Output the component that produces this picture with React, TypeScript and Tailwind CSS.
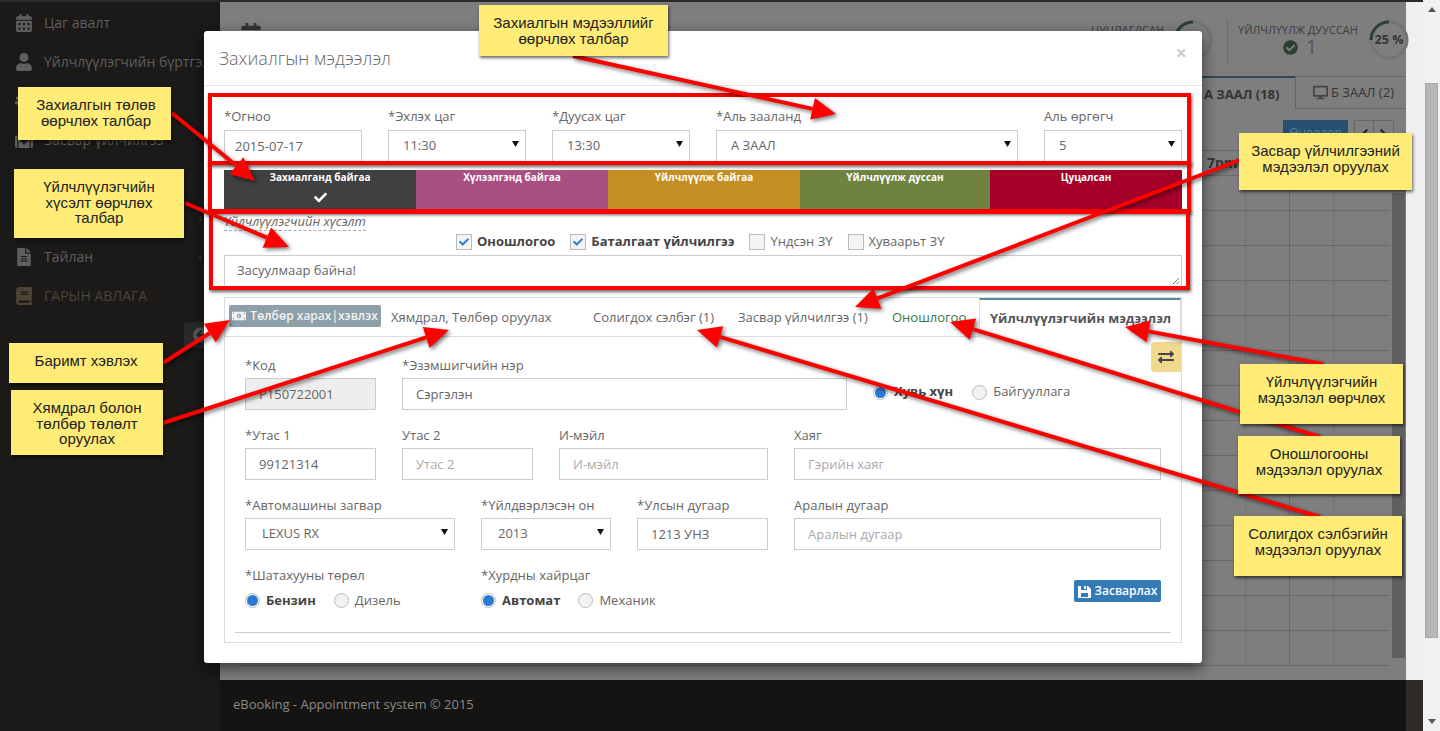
import React from 'react';
import {
  FaArrowCircleLeft,
  FaBook,
  FaCalendarAlt,
  FaCheck,
  FaCheckCircle,
  FaChevronLeft,
  FaChevronRight,
  FaCog,
  FaDesktop,
  FaExchangeAlt,
  FaFileAlt,
  FaMedkit,
  FaMoneyBillAlt,
  FaUser,
  FaUsers,
} from 'react-icons/fa';

const hours = ['9am', '10am', '11am', '12pm', '1pm', '2pm', '3pm', '4pm', '5pm', '6pm', '7pm', '8pm'];
const rowCount = Array.from({ length: 14 }, (_, i) => i);
const halfHours = Array.from({ length: 24 }, (_, i) => i);

const statuses = [
  { label: 'Захиалганд байгаа', className: 'w-[192px] bg-[#404040]', active: true },
  { label: 'Хүлээлгэнд байгаа', className: 'w-[192px] bg-[#a85082]', active: false },
  { label: 'Үйлчлүүлж байгаа', className: 'w-[192px] bg-[#c48e22]', active: false },
  { label: 'Үйлчлүүлж дуссан', className: 'w-[190px] bg-[#6f823f]', active: false },
  { label: 'Цуцалсан', className: 'w-[192px] bg-[#a5002a]', active: false },
];

const arrows = [
  { from: [573, 56], to: [836, 114] },
  { from: [172, 113], to: [255, 181] },
  { from: [185, 203], to: [289, 247] },
  { from: [1240, 160], to: [855, 307] },
  { from: [163, 363], to: [230, 320] },
  { from: [163, 423], to: [449, 330] },
  { from: [1323, 364], to: [1125, 327] },
  { from: [1320, 437], to: [950, 322] },
  { from: [1320, 517], to: [697, 330] },
];

const Arrow: React.FC<{ from: number[]; to: number[] }> = ({ from, to }) => {
  const angle = Math.atan2(to[1] - from[1], to[0] - from[0]);
  const baseX = to[0] - Math.cos(angle) * 24;
  const baseY = to[1] - Math.sin(angle) * 24;
  const nx = -Math.sin(angle) * 11;
  const ny = Math.cos(angle) * 11;
  return (
    <g fill="#ff0000">
      <line x1={from[0]} y1={from[1]} x2={baseX} y2={baseY} stroke="#ff0000" strokeWidth={4} />
      <polygon points={`${to[0]},${to[1]} ${baseX + nx},${baseY + ny} ${baseX - nx},${baseY - ny}`} />
    </g>
  );
};

const Callout: React.FC<{ className: string; children: React.ReactNode }> = ({ className, children }) => (
  <div
    className={`absolute bg-[#feec76] pt-[10px] text-center font-['Liberation_Sans',sans-serif] text-[15px] leading-[15.5px] text-[#222] shadow-[1px_2px_3px_rgba(0,0,0,0.6)] ${className}`}
  >
    {children}
  </div>
);

const Field: React.FC<{ label: string; className: string; children: React.ReactNode; top?: boolean }> = ({ label, className, children, top }) => (
  <div className={className}>
    <div className={`h-5 text-[13px] leading-5 text-[#666] ${top ? 'mb-1' : 'mb-[3px]'}`}>{label}</div>
    {children}
  </div>
);

const TextInput: React.FC<{ value?: string; placeholder?: string; disabled?: boolean; top?: boolean }> = ({ value, placeholder, disabled, top }) => (
  <input
    readOnly
    value={value ?? ''}
    placeholder={placeholder}
    className={`block h-8 w-full border border-[#ccc] text-[13px] text-[#666] outline-none placeholder:text-[#aaa] ${top ? 'px-[10px]' : 'px-[13px]'} ${disabled ? 'bg-[#eee]' : 'bg-white'}`}
  />
);

const SelectBox: React.FC<{ value: string; top?: boolean }> = ({ value, top }) => (
  <div className={`flex h-8 w-full items-center justify-between border border-[#ccc] bg-white pr-[6px] text-[13px] text-[#666] ${top ? 'pl-[14px]' : 'pl-[16px]'}`}>
    <span>{value}</span>
    <svg width="7" height="6" viewBox="0 0 7 6" className="mb-1">
      <polygon points="0,0 7,0 3.5,6" fill="#111" />
    </svg>
  </div>
);

const Radio: React.FC<{ label: string; checked?: boolean }> = ({ label, checked }) => (
  <span className="flex items-center gap-[6px] text-[13px] text-[#666]">
    <span className={`flex h-[15px] w-[15px] items-center justify-center rounded-full border border-[#bbb] ${checked ? 'bg-white' : 'bg-[#f2f2f2]'}`}>
      {checked && <span className="h-[11px] w-[11px] rounded-full bg-[#2a7bd3]" />}
    </span>
    <span className={checked ? 'font-bold text-[#444]' : ''}>{label}</span>
  </span>
);

const CheckItem: React.FC<{ label: string; checked?: boolean }> = ({ label, checked }) => (
  <span className="flex items-center gap-[5px] text-[13px] text-[#666]">
    <span className="flex h-4 w-4 items-center justify-center border border-[#bbb] bg-[#f4f4f4]">
      {checked && <FaCheck className="text-[10px] text-[#2a7bd3]" />}
    </span>
    <span className={checked ? 'font-bold text-[#444]' : ''}>{label}</span>
  </span>
);

const NavItem: React.FC<{ icon: React.ReactNode; label?: string; className?: string; caret?: boolean }> = ({ icon, label, className, caret }) => (
  <div className={`flex h-[39px] items-center gap-[10px] pl-[14px] text-sm ${className ?? 'text-[#5f5f5f]'}`}>
    <span className="flex w-5 justify-center text-[18px]">{icon}</span>
    <span className="flex-1 whitespace-nowrap">{label}</span>
    {caret && <span className="mr-[18px] text-xs text-[#444]">‹</span>}
  </div>
);

const Sidebar = () => (
  <aside className="relative w-[220px] shrink-0 bg-[#1b1a19] pt-[3px]">
    <NavItem icon={<FaCalendarAlt />} label="Цаг авалт" />
    <NavItem icon={<FaUser />} label="Үйлчлүүлэгчийн бүртгэл" />
    <NavItem icon={<FaUsers />} />
    <NavItem icon={<FaMedkit />} label="Засвар үйлчилгээ" />
    <NavItem icon={<FaCog />} />
    <NavItem icon={<FaCog />} caret />
    <NavItem icon={<FaFileAlt />} label="Тайлан" caret />
    <NavItem icon={<FaBook />} label="ГАРЫН АВЛАГА" className="text-[#4d4434]" />
    <div className="absolute left-[184px] top-[322px] flex h-[26px] w-[20px] items-center rounded-l bg-[#2a2a2a] pl-[9px] text-[#5a5a5a]">
      <FaArrowCircleLeft className="shrink-0 text-base" />
    </div>
  </aside>
);

const Ring: React.FC<{ label?: string }> = ({ label }) => (
  <div className="relative h-10 w-10 shrink-0">
    <svg width="40" height="40" viewBox="0 0 40 40">
      <circle cx="20" cy="20" r="18" fill="none" stroke="#757575" strokeWidth="3" />
      <path d="M20 2 A18 18 0 0 0 2 20" fill="none" stroke="#2c4030" strokeWidth="3" />
    </svg>
    <span className="absolute inset-0 flex items-center justify-center whitespace-nowrap text-[12.5px] font-bold text-[#333]">{label}</span>
  </div>
);

const Main = () => (
  <main className="flex w-[1186px] shrink-0 flex-col bg-[#7e7e7e]">
    <div className="flex h-[76px] shrink-0 items-start justify-between pl-[20px] pt-[20px]">
      <FaCalendarAlt className="mt-[3px] text-[22px] text-[#333]" />
      <div className="-mr-[3px] flex items-start">
        <div className="mr-[9px] mt-[2px] whitespace-nowrap text-[11px] leading-[16px] text-[#3c3c3c]">ЦУЦЛАГДСАН</div>
        <Ring />
        <div className="ml-[14px] h-[44px] border-l border-dotted border-[#5c5c5c]" />
        <div className="ml-[10px] mt-[2px] w-[120px] whitespace-nowrap text-center text-[11px] leading-[16px] text-[#3c3c3c]">
          <div>ҮЙЛЧЛҮҮЛЖ ДУУССАН</div>
          <div className="flex items-center justify-center gap-[8px] pl-1 text-[20px] leading-[18px]">
            <FaCheckCircle className="text-[15px] text-[#2c4030]" />
            <span className="text-[#555]">1</span>
          </div>
        </div>
        <div className="ml-[11px]">
          <Ring label="25 %" />
        </div>
      </div>
    </div>

    <div className="flex h-[33px] shrink-0 justify-end text-[13px] text-[#333]">
      <div className="w-[95px] border-t-2 border-[#2f4a56] pl-[4px] pt-[7px] font-bold">А ЗААЛ (18)</div>
      <div className="-mr-[2px] flex w-[113px] items-center gap-[3px] border border-[#666] pl-[17px]">
        <FaDesktop className="text-[15px] text-[#444]" />Б ЗААЛ (2)
      </div>
    </div>

    <div className="flex h-[41px] shrink-0 items-start justify-end pr-[12px] pt-[11px]">
      <div className="flex h-[28px] w-[65px] justify-center bg-[#264f70] pt-1 text-[12px] text-[#5b7d9b]">Өнөөдөр</div>
      <div className="ml-[6px] flex h-[28px] w-[20px] items-center justify-center border border-[#666] text-[#222]"><FaChevronLeft className="text-[13px]" /></div>
      <div className="flex h-[28px] w-[20px] items-center justify-center border border-l-0 border-[#666] text-[#222]"><FaChevronRight className="text-[13px]" /></div>
    </div>

    <div className="relative flex-1 overflow-hidden">
      <div className="ml-[15px] w-[1155px]">
        <div className="flex h-[26px] border-y border-[#696969]">
          <div className="w-[86px] border-l border-[#696969]" />
          {hours.map(h => (
            <div key={h} className="w-[88px] border-l border-[#696969] pl-[5px] text-[14px] font-bold leading-[24px] text-[#333]">{h}</div>
          ))}
        </div>
        {rowCount.map(r => (
          <div key={r} className="flex h-[35px] border-b border-[#696969]">
            <div className="w-[82px] border-l border-[#696969]" />
            <div className="w-[4px] border-l border-[#696969]" />
            {halfHours.map(c => (
              <div key={c} className={`w-[44px] border-l border-[#696969] ${c % 2 === 1 ? 'border-dotted' : ''}`} />
            ))}
          </div>
        ))}
      </div>
      <div className="absolute left-[1172px] top-[43px] h-[465px] w-[13px] bg-[#5f5f5f]" />
    </div>

    <footer className="h-[51px] shrink-0 bg-[#151412] pl-[13px] pt-[15px] text-[13px] text-[#8a8a8a]">
      eBooking - Appointment system © 2015
    </footer>
  </main>
);

const Modal = () => (
  <div className="absolute left-[204px] top-[31px] h-[632px] w-[998px] rounded-[3px] bg-white px-5 shadow-[0_5px_15px_rgba(0,0,0,0.55)]">
    <div className="-mx-5 flex h-[55px] items-center justify-between border-b border-[#e5e5e5] pl-[15px] pr-[15px]">
      <h4 className="text-[18px] font-light text-[#666]">Захиалгын мэдээлэл</h4>
      <span className="mb-[10px] text-[20px] font-bold leading-none text-[#ccc]">×</span>
    </div>

    <div className="mt-5 flex gap-[26px]">
      <Field top label="*Огноо" className="w-[138px]"><TextInput top value="2015-07-17" /></Field>
      <Field top label="*Эхлэх цаг" className="w-[138px]"><SelectBox top value="11:30" /></Field>
      <Field top label="*Дуусах цаг" className="w-[138px]"><SelectBox top value="13:30" /></Field>
      <Field top label="*Аль зааланд" className="w-[302px]"><SelectBox top value="А ЗААЛ" /></Field>
      <Field top label="Аль өргөгч" className="w-[138px]"><SelectBox top value="5" /></Field>
    </div>

    <div className="mt-2 flex h-10">
      {statuses.map(s => (
        <div key={s.label} className={`flex flex-col items-center pt-[1px] text-[10px] font-bold leading-[13px] text-white ${s.className}`}>
          <span>{s.label}</span>
          {s.active && <FaCheck className="mt-[7px] text-[13px]" />}
        </div>
      ))}
    </div>

    <div className="mt-1 h-[17px] w-fit border-b border-dashed border-[#aaa] text-[13px] italic leading-[15px] text-[#666]">Үйлчлүүлэгчийн хүсэлт</div>

    <div className="mt-[2px] flex h-[18px] items-center gap-[15px] pl-[232px]">
      <CheckItem label="Оношлогоо" checked />
      <CheckItem label="Баталгаат үйлчилгээ" checked />
      <CheckItem label="Үндсэн ЗҮ" />
      <CheckItem label="Хуваарьт ЗҮ" />
    </div>

    <div className="relative mt-1 flex h-8 items-center border border-[#ccc] pl-3 text-[13px] text-[#666]">
      Засуулмаар байна!
      <svg width="8" height="8" viewBox="0 0 8 8" className="absolute bottom-px right-px">
        <path d="M1 7 L7 1 M4.5 7 L7 4.5" stroke="#777" strokeWidth="1" />
      </svg>
    </div>

    <div className="relative mt-[10px] h-[346px] border border-[#ddd]">
      <div className="flex h-[39px] border-b border-[#ddd] text-[13px] text-[#666]">
        <div className="ml-1 mt-[7px] flex h-[22px] w-[152px] items-center justify-center gap-1 rounded-[2px] bg-[#8d9fa9] text-[12px] font-semibold text-[#f2f2f2]">
          <FaMoneyBillAlt className="text-[14px]" />
          <span>Төлбөр харах|хэвлэх</span>
        </div>
        <div className="w-[202px] pl-[10px] pt-[10px]">Хямдрал, Төлбөр оруулах</div>
        <div className="w-[145px] pl-[10px] pt-[10px]">Солигдох сэлбэг (1)</div>
        <div className="w-[154px] pl-[10px] pt-[10px]">Засвар үйлчилгээ (1)</div>
        <div className="w-[97px] pl-[10px] pt-[10px] text-[#3c763d]">Оношлогоо</div>
        <div className="-mb-px h-[40px] w-[202px] border-x border-t-2 border-[#ddd] border-t-[#5a8ba0] bg-white pl-[10px] pt-[9px] font-bold text-[#555]">Үйлчлүүлэгчийн мэдээлэл</div>
      </div>

      <div className="absolute right-0 top-[44px] flex h-[30px] w-[30px] items-center justify-center rounded-l bg-[#f0d98c] text-[#444]">
        <FaExchangeAlt className="text-[16px]" />
      </div>

      <div className="px-5 pt-[18px]">
        <div className="flex gap-[26px]">
          <Field label="*Код" className="w-[131px]"><TextInput value="P150722001" disabled /></Field>
          <Field label="*Эзэмшигчийн нэр" className="w-[445px]"><TextInput value="Сэргэлэн" /></Field>
          <div className="flex items-center gap-[19px] pt-[19px]">
            <Radio label="Хувь хүн" checked />
            <Radio label="Байгууллага" />
          </div>
        </div>

        <div className="mt-[15px] flex gap-[26px]">
          <Field label="*Утас 1" className="w-[131px]"><TextInput value="99121314" /></Field>
          <Field label="Утас 2" className="w-[131px]"><TextInput placeholder="Утас 2" /></Field>
          <Field label="И-мэйл" className="w-[209px]"><TextInput placeholder="И-мэйл" /></Field>
          <Field label="Хаяг" className="w-[367px]"><TextInput placeholder="Гэрийн хаяг" /></Field>
        </div>

        <div className="mt-[15px] flex gap-[26px]">
          <Field label="*Автомашины загвар" className="w-[210px]"><SelectBox value="LEXUS RX" /></Field>
          <Field label="*Үйлдвэрлэсэн он" className="w-[130px]"><SelectBox value="2013" /></Field>
          <Field label="*Улсын дугаар" className="w-[131px]"><TextInput value="1213 УНЗ" /></Field>
          <Field label="Аралын дугаар" className="w-[367px]"><TextInput placeholder="Аралын дугаар" /></Field>
        </div>

        <div className="mt-[15px] flex">
          <div className="w-[236px]">
            <div className="h-5 text-[13px] leading-5 text-[#666]">*Шатахууны төрөл</div>
            <div className="mt-[6px] flex gap-[18px]">
              <Radio label="Бензин" checked />
              <Radio label="Дизель" />
            </div>
          </div>
          <div>
            <div className="h-5 text-[13px] leading-5 text-[#666]">*Хурдны хайрцаг</div>
            <div className="mt-[6px] flex gap-[18px]">
              <Radio label="Автомат" checked />
              <Radio label="Механик" />
            </div>
          </div>
          <div className="ml-auto mt-[15px] flex h-[22px] w-[87px] items-center justify-center gap-1 rounded-[2px] bg-[#337ab7] text-[12px] font-semibold text-white">
            <svg width="13" height="13" viewBox="0 0 13 13">
              <path fill="#fff" fillRule="evenodd" d="M0 1h3v4h6V1h1l3 3v9H0zM3 8v4h7V8z" />
              <rect x="6" y="1" width="2" height="3" fill="#fff" />
            </svg>
            Засварлах
          </div>
        </div>
      </div>

      <div className="absolute bottom-[9px] left-[10px] right-[10px] border-t border-[#ccc]" />
    </div>
  </div>
);

const Annotations = () => (
  <>
    <div className="absolute left-[208px] top-[93px] h-[72px] w-[983px] border-4 border-[#ff0000] shadow-[1px_2px_3px_rgba(0,0,0,0.6)]" />
    <div className="absolute left-[208px] top-[161px] h-[52px] w-[983px] border-4 border-[#ff0000] shadow-[1px_2px_3px_rgba(0,0,0,0.6)]" />
    <div className="absolute left-[209px] top-[210px] h-[80px] w-[981px] border-4 border-[#ff0000] shadow-[1px_2px_3px_rgba(0,0,0,0.6)]" />
    <svg width="1440" height="731" className="absolute left-0 top-0 drop-shadow-[2px_2px_2px_rgba(0,0,0,0.55)]">
      {arrows.map((a, i) => (
        <Arrow key={i} from={a.from} to={a.to} />
      ))}
    </svg>
    <Callout className="left-[479px] top-[5px] h-[51px] w-[189px]">Захиалгын мэдээллийг<br />өөрчлөх талбар</Callout>
    <Callout className="left-[18px] top-[87px] h-[53px] w-[153px] pl-[3px]">Захиалгын төлөв<br />өөрчлөх талбар</Callout>
    <Callout className="left-[14px] top-[169px] h-[69px] w-[170px]">Үйлчлүүлэгчийн<br />хүсэлт өөрчлөх<br />талбар</Callout>
    <Callout className="left-[1239px] top-[133px] h-[57px] w-[173px]">Засвар үйлчилгээний<br />мэдээлэл оруулах</Callout>
    <Callout className="left-[9px] top-[343px] h-[40px] w-[154px]">Баримт хэвлэх</Callout>
    <Callout className="left-[11px] top-[390px] h-[65px] w-[152px]">Хямдрал болон<br />төлбөр төлөлт<br />оруулах</Callout>
    <Callout className="left-[1240px] top-[364px] h-[60px] w-[163px]">Үйлчлүүлэгчийн<br />мэдээлэл өөрчлөх</Callout>
    <Callout className="left-[1238px] top-[436px] h-[58px] w-[162px]">Оношлогооны<br />мэдээлэл оруулах</Callout>
    <Callout className="left-[1234px] top-[516px] h-[60px] w-[168px]">Солигдох сэлбэгийн<br />мэдээлэл оруулах</Callout>
  </>
);

export default function App() {
  return (
    <div className="relative flex h-[731px] w-[1440px] overflow-hidden font-['Open_Sans','Noto_Sans',sans-serif]">
      <Sidebar />
      <Main />
      <div className="flex w-[17px] shrink-0 flex-col bg-[#efefef]">
        <div className="h-[2px] bg-[#2a2a2a]" />
        <div className="flex-1" />
        <div className="h-[51px] bg-[#2d2a27]" />
      </div>
      <div className="flex w-[17px] shrink-0 flex-col items-center bg-[#f1f1f1]">
        <svg width="8" height="5" viewBox="0 0 8 5" className="mt-[7px]"><polygon points="4,0 8,5 0,5" fill="#555" /></svg>
        <div className="mt-[71px] h-[555px] w-[13px] border border-[#a8a8a8] bg-[#b7b7b7]" />
        <svg width="8" height="5" viewBox="0 0 8 5" className="mt-auto mb-[7px]"><polygon points="0,0 8,0 4,5" fill="#555" /></svg>
      </div>
      <div className="absolute left-0 top-0 h-[2px] w-[1423px] bg-[#2a2a2a]" />
      <Modal />
      <Annotations />
    </div>
  );
}
